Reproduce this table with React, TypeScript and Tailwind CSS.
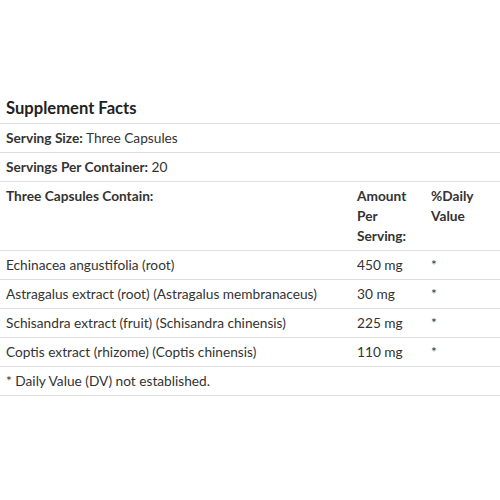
const ROWS = [
  { name: 'Echinacea angustifolia (root)', amount: '450 mg', dv: '*' },
  { name: 'Astragalus extract (root) (Astragalus membranaceus)', amount: '30 mg', dv: '*' },
  { name: 'Schisandra extract (fruit) (Schisandra chinensis)', amount: '225 mg', dv: '*' },
  { name: 'Coptis extract (rhizome) (Coptis chinensis)', amount: '110 mg', dv: '*' },
];

const cell = 'border-b border-[#dedede] px-[6px] py-[4px] align-top leading-[20px]';

export default function App() {
  return (
    <div className="h-[500px] w-[500px] bg-white pt-[97px] text-[13.7px] text-[#333] [font-family:Lato,'Liberation_Sans',sans-serif]">
      <table className="w-full table-fixed border-collapse text-left">
        <colgroup>
          <col className="w-[351px]" />
          <col className="w-[74px]" />
          <col />
        </colgroup>
        <tbody>
          <tr>
            <th colSpan={3} className="border-b border-[#dedede] px-[6px] pb-[4px] text-[16.6px] font-bold leading-[22px] text-[#222]">
              Supplement Facts
            </th>
          </tr>
          <tr>
            <td colSpan={3} className={cell}>
              <span className="font-bold">Serving Size:</span> Three Capsules
            </td>
          </tr>
          <tr>
            <td colSpan={3} className={cell}>
              <span className="font-bold">Servings Per Container:</span> 20
            </td>
          </tr>
          <tr>
            <th className={`${cell} border-t border-t-[#e6e6e6] font-bold`}>Three Capsules Contain:</th>
            <th className={`${cell} border-t border-t-[#e6e6e6] font-bold`}>Amount Per Serving:</th>
            <th className={`${cell} border-t border-t-[#e6e6e6] font-bold`}>%Daily Value</th>
          </tr>
          {ROWS.map((r) => (
            <tr key={r.name}>
              <td className={cell}>{r.name}</td>
              <td className={cell}>{r.amount}</td>
              <td className={cell}>{r.dv}</td>
            </tr>
          ))}
          <tr>
            <td colSpan={3} className={cell}>
              * Daily Value (DV) not established.
            </td>
          </tr>
        </tbody>
      </table>
    </div>
  );
}
